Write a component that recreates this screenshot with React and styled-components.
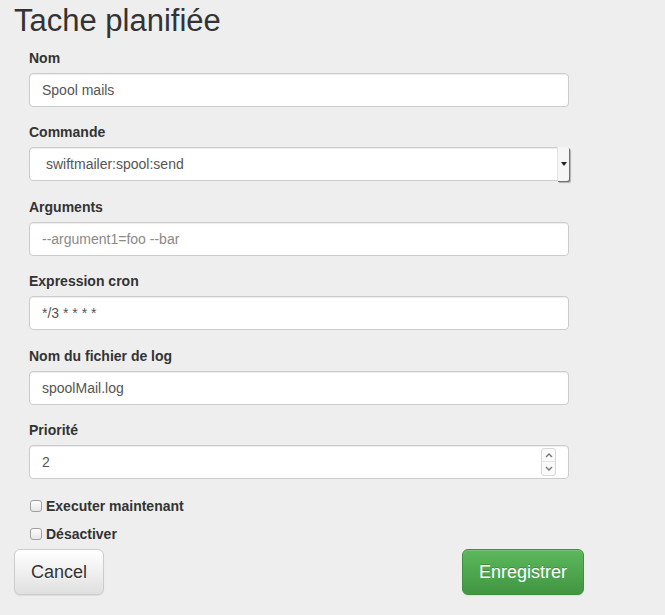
import React from "react";
import styled, { createGlobalStyle } from "styled-components";

const Global = createGlobalStyle`
  html, body { margin: 0; padding: 0; background: #eeeeee; }
  body {
    font-family: "Liberation Sans", Arial, sans-serif;
    font-size: 14px;
    line-height: 1.42857;
    color: #333;
  }
  * { box-sizing: border-box; }
`;

const Page = styled.div`
  padding: 0 14px;
  width: 665px;
  height: 615px;
  overflow: hidden;
`;

const Title = styled.h1`
  margin: 0;
  padding-top: 2px;
  font-size: 31px;
  font-weight: 400;
  line-height: 38px;
  color: #333;
`;

const Form = styled.form`
  padding: 8px 0 0 15px;
  width: 555px;
`;

const Group = styled.div`
  margin-bottom: 15.4px;
  display: flex;
  flex-direction: column;
`;

const Label = styled.label`
  font-weight: 700;
  font-size: 14px;
  line-height: 20px;
  margin-bottom: 5px;
  color: #333;
`;

const Field = styled.div`
  position: relative;
  display: flex;
  align-items: center;
  height: 34px;
  background: #fff;
  border: 1px solid #ccc;
  border-radius: 4px;
  box-shadow: inset 0 1px 1px rgba(0, 0, 0, 0.075);
`;

const Input = styled.input`
  flex: 1;
  min-width: 0;
  height: 100%;
  border: 0;
  background: transparent;
  padding: 0 12px;
  font-family: "Liberation Sans", Arial, sans-serif;
  font-size: 14px;
  color: #555;
  outline: none;
  &::placeholder { color: #8a8a8a; }
  &::-webkit-inner-spin-button,
  &::-webkit-outer-spin-button { -webkit-appearance: none; margin: 0; }
  -moz-appearance: textfield;
`;

const SelectText = styled.span`
  flex: 1;
  padding: 2px 0 0 16px;
  font-size: 14px;
  color: #555;
`;

const SelectArrow = styled.span`
  align-self: stretch;
  width: 12px;
  margin: -1px -1px -1px 0;
  background: #f6f6f6;
  border-left: 1px solid #e2e2e2;
  box-shadow: 1px 1px 0 #6f6f6f, 2px 2px 1px rgba(0,0,0,0.25);
  display: flex;
  align-items: center;
  justify-content: center;
  border-radius: 0 2px 2px 0;
`;

const Spinner = styled.div`
  display: flex;
  flex-direction: column;
  width: 15px;
  height: 28px;
  margin-right: 12px;
  border: 1px solid #d8d8d8;
  border-radius: 3px;
  background: #fafafa;
`;

const SpinHalf = styled.div`
  flex: 1;
  display: flex;
  align-items: center;
  justify-content: center;
  & + & { border-top: 1px solid #e4e4e4; }
`;

const CheckRow = styled.label`
  display: flex;
  align-items: center;
  height: 20px;
  margin-top: ${(p) => p.$top}px;
  font-weight: 700;
  color: #333;
`;

const Box = styled.span`
  width: 12px;
  height: 12px;
  margin: 0 4px 0 1px;
  border: 1px solid #a0a0a0;
  border-radius: 3px;
  background: linear-gradient(#fdfdfd, #e6e6e6);
  position: relative;
  top: -1px;
`;

const Actions = styled.div`
  display: flex;
  justify-content: space-between;
  width: 570px;
  margin-top: 4px;
`;

const Button = styled.button`
  height: 46px;
  padding: 0 16px;
  font-family: "Liberation Sans", Arial, sans-serif;
  font-size: 18px;
  border-radius: 6px;
  cursor: pointer;
  border: 1px solid ${(p) => (p.$primary ? "#3e8f3e" : "#ccc")};
  color: ${(p) => (p.$primary ? "#fff" : "#333")};
  background: ${(p) =>
    p.$primary
      ? "linear-gradient(#5cb85c, #419641)"
      : "linear-gradient(#ffffff, #e0e0e0)"};
  box-shadow: inset 0 1px 0 rgba(255,255,255,0.15), 0 1px 1px rgba(0,0,0,0.075);
  text-shadow: ${(p) => (p.$primary ? "0 -1px 0 rgba(0,0,0,0.2)" : "0 1px 0 #fff")};
`;

const Chevron = ({ up }) => (
  <svg width="8" height="5" viewBox="0 0 8 5">
    <path
      d={up ? "M1 4 L4 1 L7 4" : "M1 1 L4 4 L7 1"}
      fill="none"
      stroke="#777"
      strokeWidth="1.4"
    />
  </svg>
);

export default function App() {
  return (
    <>
      <Global />
      <Page>
        <Title>Tache planifiée</Title>
        <Form onSubmit={(e) => e.preventDefault()}>
          <Group>
            <Label>Nom</Label>
            <Field><Input defaultValue="Spool mails" /></Field>
          </Group>
          <Group>
            <Label>Commande</Label>
            <Field>
              <SelectText>swiftmailer:spool:send</SelectText>
              <SelectArrow>
                <svg width="6" height="4" viewBox="0 0 6 4"><path d="M0 0 H6 L3 4 Z" fill="#222" /></svg>
              </SelectArrow>
            </Field>
          </Group>
          <Group>
            <Label>Arguments</Label>
            <Field><Input placeholder="--argument1=foo --bar" /></Field>
          </Group>
          <Group>
            <Label>Expression cron</Label>
            <Field><Input defaultValue="*/3 * * * *" /></Field>
          </Group>
          <Group>
            <Label>Nom du fichier de log</Label>
            <Field><Input defaultValue="spoolMail.log" /></Field>
          </Group>
          <Group>
            <Label>Priorité</Label>
            <Field>
              <Input type="number" defaultValue="2" />
              <Spinner>
                <SpinHalf><Chevron up /></SpinHalf>
                <SpinHalf><Chevron /></SpinHalf>
              </Spinner>
            </Field>
          </Group>
          <CheckRow $top={18.4}><Box />Executer maintenant</CheckRow>
          <CheckRow $top={8}><Box />Désactiver</CheckRow>
        </Form>
        <Actions>
          <Button type="button">Cancel</Button>
          <Button type="button" $primary>Enregistrer</Button>
        </Actions>
      </Page>
    </>
  );
}
